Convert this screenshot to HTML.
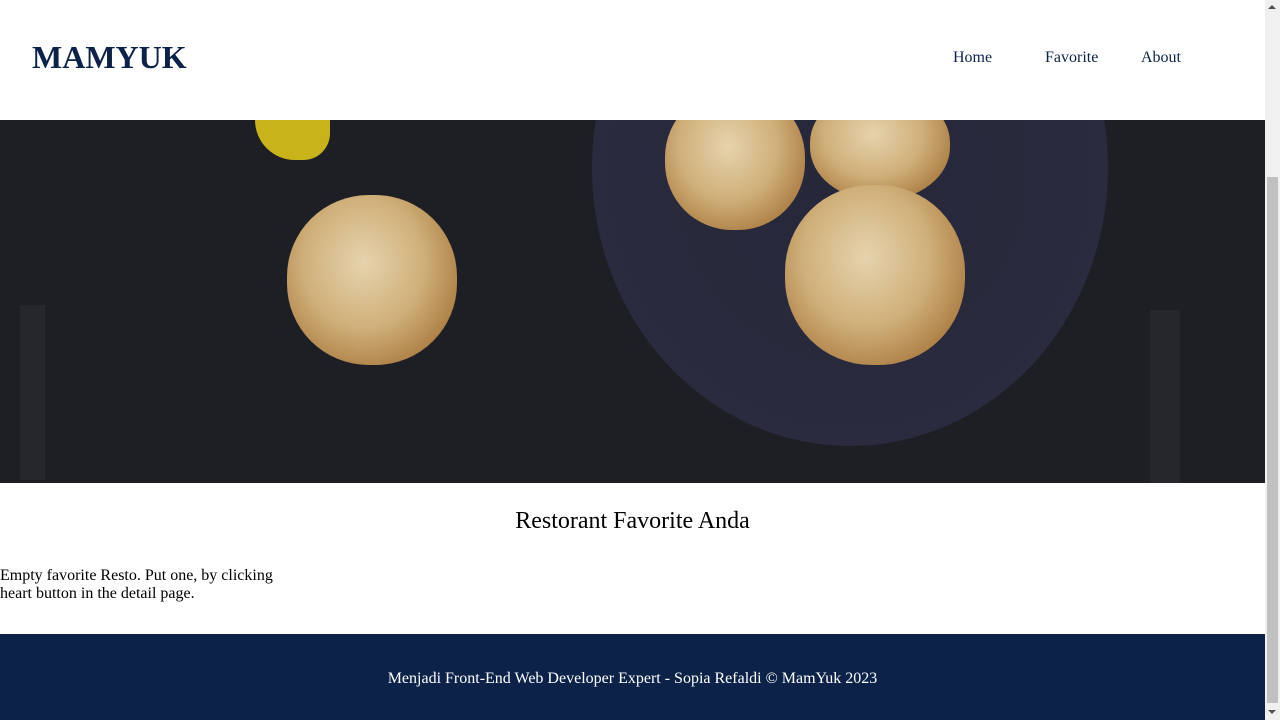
<!DOCTYPE html>
<html><head><style>
html,body{margin:0;padding:0;}
body{width:1280px;height:720px;overflow:hidden;position:relative;background:#fff;font-family:"Liberation Serif",serif;}
.abs{position:absolute;}
.hdr{left:0;top:0;width:1265px;height:120px;background:#fff;z-index:5;}
.logo{left:32px;top:39px;font-size:32px;font-weight:bold;color:#0c2248;}
.nav{top:49px;font-size:16px;color:#0c2248;}
.hero{left:0;top:120px;width:1265px;height:363px;background:#1e1f24;overflow:hidden;}
.ck{border-radius:48%;background:radial-gradient(ellipse at 45% 40%,#e6d3ad 0%,#d0b07a 45%,#a97a40 80%,#4a3018 100%);}
h2{position:absolute;left:0;width:1265px;top:508px;margin:0;text-align:center;font-weight:normal;font-size:24px;color:#000;}
.msg{left:0;top:567px;width:290px;font-size:16px;line-height:18px;color:#000;}
.ft{left:0;top:634px;width:1265px;height:86px;background:#0c2248;color:#fff;text-align:center;font-size:16px;line-height:90px;}
.sb{left:1265px;top:0;width:15px;height:720px;background:#f0f0f0;}
.th{left:1267px;top:177px;width:11px;height:526px;background:#c1c1c1;}
</style></head><body>
<div class="abs hero">
  <div class="abs" style="left:592px;top:-230px;width:516px;height:556px;border-radius:50%;background:radial-gradient(ellipse at 50% 50%,#26283a 0%,#2a2b3e 78%,#7a5e58 90%,#3a2e34 97%,#1e1f24 100%);"></div>
  <div class="abs ck" style="left:287px;top:75px;width:170px;height:170px;"></div>
  <div class="abs ck" style="left:665px;top:-30px;width:140px;height:140px;"></div>
  <div class="abs ck" style="left:810px;top:-30px;width:140px;height:110px;"></div>
  <div class="abs ck" style="left:785px;top:65px;width:180px;height:180px;"></div>
  <div class="abs" style="left:255px;top:0;width:75px;height:40px;background:#c8b41a;border-radius:0 0 30px 45px;"></div>
  <div class="abs" style="left:20px;top:185px;width:25px;height:175px;background:#26272a;"></div>
  <div class="abs" style="left:1150px;top:190px;width:30px;height:175px;background:#26272a;"></div>
</div>
<div class="abs hdr">
  <div class="abs logo">MAMYUK</div>
  <div class="abs nav" style="left:953px;">Home</div>
  <div class="abs nav" style="left:1045px;">Favorite</div>
  <div class="abs nav" style="left:1141px;">About</div>
</div>
<h2>Restorant Favorite Anda</h2>
<div class="abs msg">Empty favorite Resto. Put one, by clicking heart button in the detail page.</div>
<div class="abs ft">Menjadi Front-End Web Developer Expert - Sopia Refaldi © MamYuk 2023</div>
<div class="abs sb"></div>
<div class="abs th"></div>
<div class="abs" style="left:1268px;top:5px;width:0;height:0;border-left:4px solid transparent;border-right:4px solid transparent;border-bottom:4px solid #505050;"></div>
<div class="abs" style="left:1268px;top:710px;width:0;height:0;border-left:4px solid transparent;border-right:4px solid transparent;border-top:4px solid #505050;"></div>
</body></html>
